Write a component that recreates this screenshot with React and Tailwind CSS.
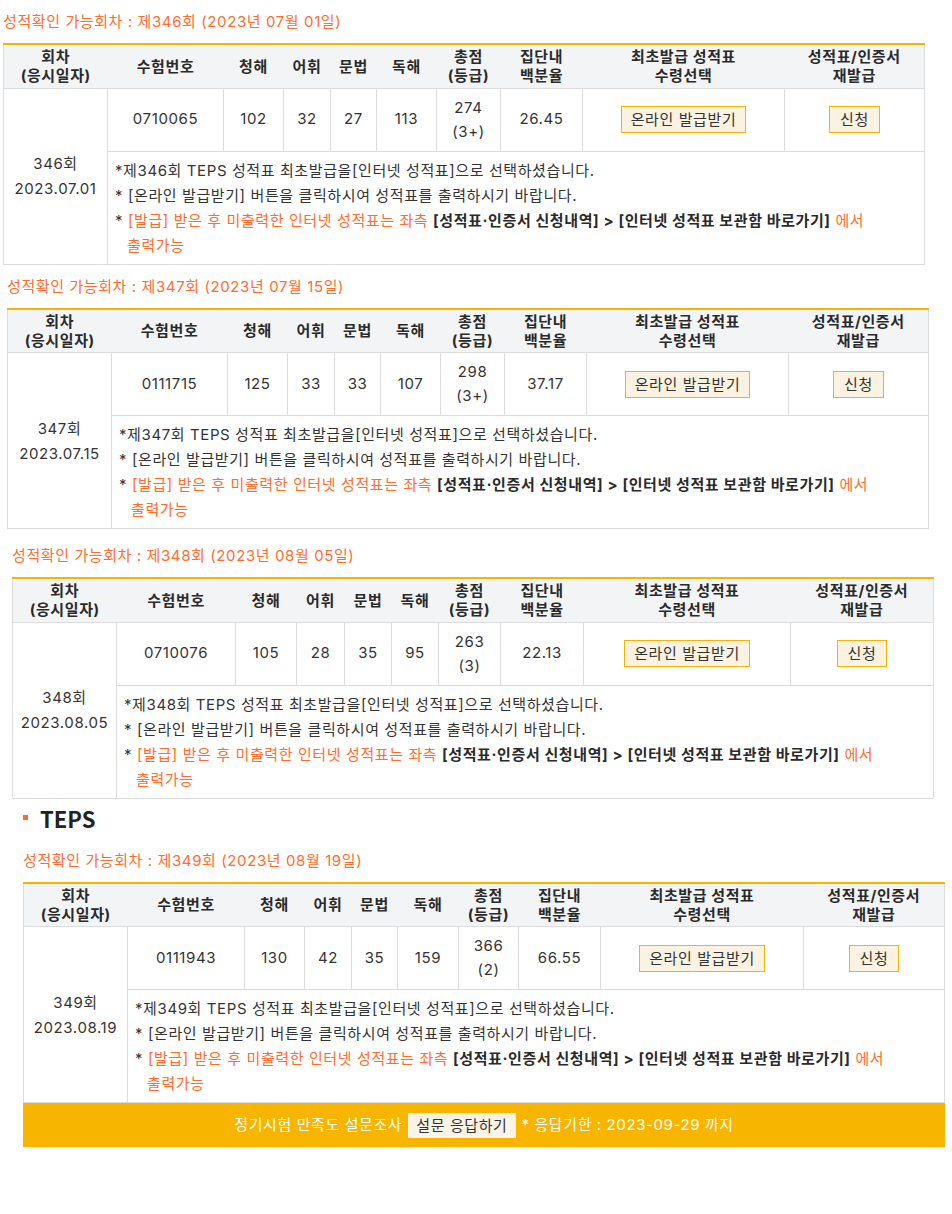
import React from 'react';

const blocks = [
  {
    no: 346, date: '2023.07.01', title: '(2023년 07월 01일)',
    id: '0710065', lc: 102, voca: 32, gram: 27, rc: 113, total: 274, grade: '3+', pct: '26.45',
    wrap: 'ml-[3px] mt-[12px]',
    cols: ['w-[104px]', 'w-[116px]', 'w-[60px]', 'w-[47px]', 'w-[46px]', 'w-[60px]', 'w-[64px]', 'w-[82px]', 'w-[202px]', 'w-[140px]'],
  },
  {
    no: 347, date: '2023.07.15', title: '(2023년 07월 15일)',
    id: '0111715', lc: 125, voca: 33, gram: 33, rc: 107, total: 298, grade: '3+', pct: '37.17',
    wrap: 'ml-[7px] mt-[12px]',
    cols: ['w-[104px]', 'w-[116px]', 'w-[60px]', 'w-[47px]', 'w-[46px]', 'w-[60px]', 'w-[64px]', 'w-[82px]', 'w-[202px]', 'w-[140px]'],
  },
  {
    no: 348, date: '2023.08.05', title: '(2023년 08월 05일)',
    id: '0710076', lc: 105, voca: 28, gram: 35, rc: 95, total: 263, grade: '3', pct: '22.13',
    wrap: 'ml-[12px] mt-[17px]',
    cols: ['w-[104px]', 'w-[119px]', 'w-[61px]', 'w-[48px]', 'w-[47px]', 'w-[47px]', 'w-[62px]', 'w-[83px]', 'w-[207px]', 'w-[143px]'],
  },
];

const last = {
  no: 349, date: '2023.08.19', title: '(2023년 08월 19일)',
  id: '0111943', lc: 130, voca: 42, gram: 35, rc: 159, total: 366, grade: '2', pct: '66.55',
  wrap: 'ml-[23px] mt-[20px]',
  cols: ['w-[104px]', 'w-[117px]', 'w-[60px]', 'w-[47px]', 'w-[46px]', 'w-[61px]', 'w-[60px]', 'w-[82px]', 'w-[203px]', 'w-[141px]'],
};

const headers = [
  ['회차', '(응시일자)'],
  ['수험번호'],
  ['청해'],
  ['어휘'],
  ['문법'],
  ['독해'],
  ['총점', '(등급)'],
  ['집단내', '백분율'],
  ['최초발급 성적표', '수령선택'],
  ['성적표/인증서', '재발급'],
];

const ScoreBlock = ({ b, footer }) => {
  const td = 'border border-[#dcdcdc] text-center align-middle';
  return (
    <div className={b.wrap}>
      <p className="text-[15px] leading-[20px] text-[#ff6d2d]">
        성적확인 가능회차 : 제{b.no}회 {b.title}
      </p>
      <div className="mt-[11px] w-[922px] border-t-2 border-[#f5b400]">
        <table className="w-[922px] table-fixed border-collapse text-[15px] text-[#333]">
          <colgroup>
            {b.cols.map((c, i) => <col key={i} className={c} />)}
          </colgroup>
          <thead>
            <tr className="h-[43px] bg-[#f3f4f6] text-[#2a2a2a]">
              {headers.map((h, i) => (
                <th
                  key={i}
                  className={`border-b border-[#dcdcdc] font-bold leading-[19px] ${i === 0 ? 'border-l' : ''} ${i === 9 ? 'border-r' : ''}`}
                >
                  {h.map((line, j) => <div key={j}>{line}</div>)}
                </th>
              ))}
            </tr>
          </thead>
          <tbody>
            <tr className="h-[63px]">
              <td rowSpan={2} className={`${td} leading-[25px]`}>
                <div>{b.no}회</div>
                <div>{b.date}</div>
              </td>
              <td className={td}>{b.id}</td>
              <td className={td}>{b.lc}</td>
              <td className={td}>{b.voca}</td>
              <td className={td}>{b.gram}</td>
              <td className={td}>{b.rc}</td>
              <td className={`${td} leading-[24px]`}>
                <div>{b.total}</div>
                <div>({b.grade})</div>
              </td>
              <td className={td}>{b.pct}</td>
              <td className={td}>
                <span className="inline-block h-[27px] border border-[#f5b400] bg-[#fbf2e2] px-[9px] leading-[25px]">
                  온라인 발급받기
                </span>
              </td>
              <td className={td}>
                <span className="inline-block h-[27px] border border-[#f5b400] bg-[#fbf2e2] px-[10px] leading-[25px]">
                  신청
                </span>
              </td>
            </tr>
            <tr className="h-[112px]">
              <td colSpan={9} className="border border-[#dcdcdc] px-[7px] pt-[6px] pb-[6px] align-top leading-[25px]">
                <p>*제{b.no}회 TEPS 성적표 최초발급을[인터넷 성적표]으로 선택하셨습니다.</p>
                <p>* [온라인 발급받기] 버튼을 클릭하시여 성적표를 출력하시기 바랍니다.</p>
                <p className="pl-[12px] -indent-[12px]">
                  *{' '}
                  <span className="text-[#ff6d2d]">[발급] 받은 후 미출력한 인터넷 성적표는 좌측 </span>
                  <b className="text-[#2a2a2a]">[성적표·인증서 신청내역] &gt; [인터넷 성적표 보관함 바로가기]</b>
                  <span className="text-[#ff6d2d]"> 에서<br />출력가능</span>
                </p>
              </td>
            </tr>
          </tbody>
        </table>
        {footer && (
          <div className="flex h-[44px] items-center justify-center gap-[6px] bg-[#f7b500] text-[15px] text-white">
            <span>정기시험 만족도 설문조사</span>
            <span className="inline-block h-[25px] bg-[#fbf3e6] px-[8px] leading-[25px] text-[#333]">설문 응답하기</span>
            <span>* 응답기한 : 2023-09-29 까지</span>
          </div>
        )}
      </div>
    </div>
  );
};

export default function App() {
  return (
    <div className="min-h-[1214px] w-[952px] bg-white font-['Inter','Noto_Sans_CJK_KR',sans-serif] tracking-[0.6px] text-[#333]">
      {blocks.map(b => <ScoreBlock key={b.no} b={b} />)}
      <div className="ml-[23px] mt-[6px] flex items-center gap-[12px]">
        <span className="block h-[5px] w-[5px] bg-[#ff6d2d]" />
        <span className="font-['Noto_Sans_CJK_KR',sans-serif] text-[22px] font-bold leading-[26px] tracking-normal text-[#222]">TEPS</span>
      </div>
      <ScoreBlock b={last} footer />
    </div>
  );
}
